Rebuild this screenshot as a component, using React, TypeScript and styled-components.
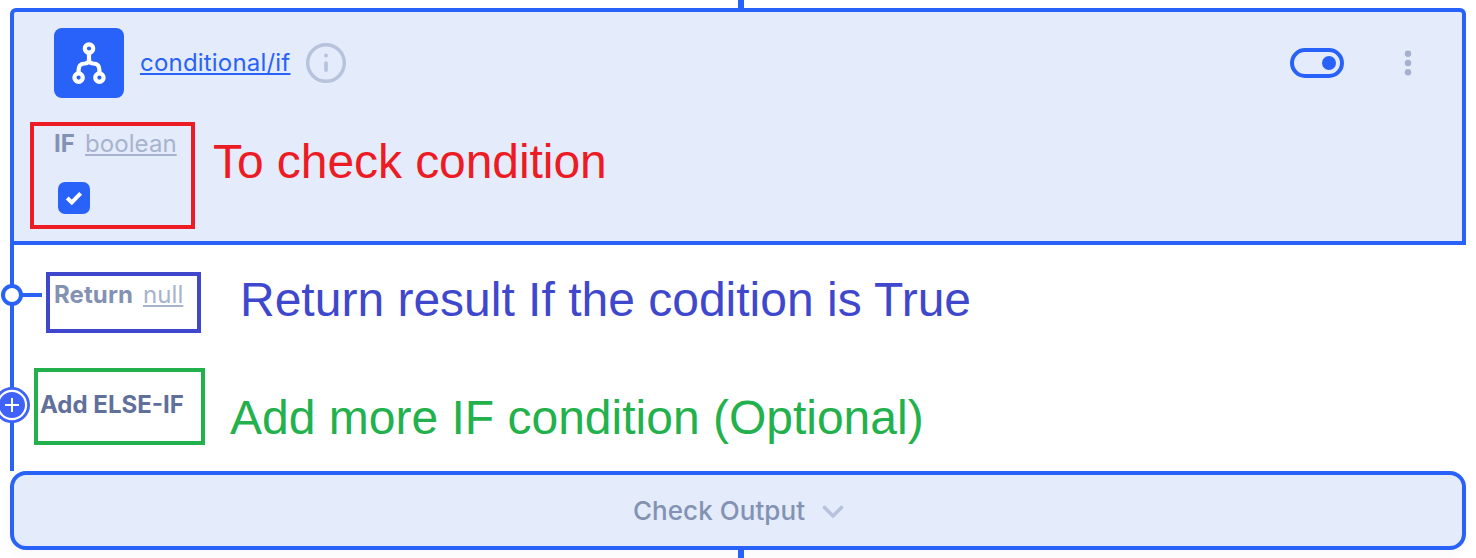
import React from 'react';
import styled, { createGlobalStyle } from 'styled-components';

const blue = '#2962f9';
const panel = '#e4ebfa';

const GlobalStyle = createGlobalStyle`
  *, *::before, *::after { box-sizing: border-box; }
  body { margin: 0; background: #fff; font-family: Inter, "Liberation Sans", sans-serif; }
`;

const Canvas = styled.main`
  position: relative;
  display: flex;
  flex-direction: column;
  width: 1476px;
  height: 558px;
  padding: 0 10px;
  overflow: hidden;
  background: #fff;
`;

const Connector = styled.div`
  flex: 0 0 8px;
  width: 6px;
  margin-left: 728px;
  background: ${blue};
`;

const StepCard = styled.section`
  flex: 0 0 237px;
  padding: 16px 48px 0 40px;
  border: 4px solid ${blue};
  border-radius: 6px 6px 0 0;
  background: ${panel};
`;

const Header = styled.header`
  display: flex;
  align-items: center;
  height: 70px;
`;

const StepIcon = styled.div`
  display: grid;
  place-items: center;
  width: 70px;
  height: 70px;
  margin-right: 16px;
  border-radius: 8px;
  background: ${blue};
`;

const StepLink = styled.a`
  width: 150px;
  margin-right: 16px;
  color: ${blue};
  font-size: 24px;
  line-height: 30px;
  letter-spacing: 0.2px;
  white-space: nowrap;
  text-decoration: underline;
  text-decoration-thickness: 2px;
  text-underline-offset: 2px;
`;

const Actions = styled.div`
  display: flex;
  align-items: center;
  gap: 58px;
  margin-left: auto;
`;

const Toggle = styled.button`
  display: flex;
  align-items: center;
  justify-content: flex-end;
  width: 54px;
  height: 30px;
  padding: 0 4px;
  border: 4px solid ${blue};
  border-radius: 15px;
  background: transparent;
`;

const ToggleKnob = styled.span`
  width: 14px;
  height: 14px;
  border-radius: 50%;
  background: ${blue};
`;

const Field = styled.div`
  display: flex;
  align-items: center;
  height: 30px;
  font-size: 24px;
  line-height: 30px;
  white-space: nowrap;
`;

const ConditionField = styled(Field)`
  margin-top: 31px;
`;

const FieldName = styled.span<{ $width: number }>`
  width: ${p => p.$width}px;
  margin-right: 10px;
  color: #8392b3;
  font-weight: 700;
  letter-spacing: 0.1px;
`;

const FieldType = styled.span`
  color: #a7b3ce;
  letter-spacing: 0.08px;
  text-decoration: underline;
  text-decoration-thickness: 2px;
  text-underline-offset: 2px;
`;

const Checkbox = styled.span`
  display: grid;
  place-items: center;
  width: 32px;
  height: 32px;
  margin: 23px 0 0 4px;
  border-radius: 7px;
  background: ${blue};
`;

const Branches = styled.section`
  flex: 0 0 226px;
  display: flex;
  flex-direction: column;
  border-left: 4px solid ${blue};
`;

const Branch = styled.div<{ $top: number }>`
  display: flex;
  align-items: center;
  height: 36px;
  margin-top: ${p => p.$top}px;
`;

const ReturnNode = styled.svg`
  width: 42px;
  height: 24px;
  margin-left: -14px;
  margin-right: 12px;
`;

const AddNode = styled.svg`
  width: 36px;
  height: 36px;
  margin-left: -20px;
  margin-right: 10px;
`;

const AddLabel = styled.span`
  color: #61709a;
  font-size: 24px;
  font-weight: 700;
  line-height: 30px;
`;

const OutputBar = styled.button`
  flex: 0 0 79px;
  display: flex;
  align-items: center;
  justify-content: center;
  gap: 17px;
  padding: 0 0 0 1px;
  border: 4px solid ${blue};
  border-radius: 16px;
  background: ${panel};
  box-shadow: 0 4px 12px rgba(0, 0, 0, 0.03);
  color: #8392b3;
  font: 500 26px/32px Inter, "Liberation Sans", sans-serif;
  letter-spacing: 0.06px;
`;

const Highlight = styled.div<{ $x: number; $y: number; $w: number; $h: number; $color: string }>`
  position: absolute;
  left: ${p => p.$x}px;
  top: ${p => p.$y}px;
  width: ${p => p.$w}px;
  height: ${p => p.$h}px;
  border: 4px solid ${p => p.$color};
`;

const Note = styled.div<{ $x: number; $y: number; $color: string; $tracking?: number }>`
  position: absolute;
  left: ${p => p.$x}px;
  top: ${p => p.$y}px;
  color: ${p => p.$color};
  font: 48px/56px "Liberation Sans", Arial, sans-serif;
  letter-spacing: ${p => p.$tracking ?? 0}px;
  white-space: nowrap;
`;

export default function App() {
  return (
    <>
      <GlobalStyle />
      <Canvas>
        <Connector />
        <StepCard>
          <Header>
            <StepIcon>
              <svg width="34" height="42" viewBox="0 0 34 42" fill="none" stroke="#fff" strokeWidth="4.2">
                <circle cx="17" cy="6.5" r="4.2" />
                <circle cx="6.6" cy="35.6" r="4.2" />
                <circle cx="27.4" cy="35.6" r="4.2" />
                <path d="M17 10.5V21M6.6 31.5V28Q6.6 21.5 13 21.5Q17 21 17 18Q17 21 21 21.5Q27.4 21.5 27.4 28V31.5" />
              </svg>
            </StepIcon>
            <StepLink>conditional/if</StepLink>
            <svg width="40" height="40" viewBox="0 0 40 40" fill="none" stroke="#b7c3dd" strokeLinecap="round">
              <circle cx="20" cy="20" r="18.3" strokeWidth="3.4" />
              <path d="M20 20.2V27" strokeWidth="3.8" />
              <circle cx="20" cy="12.6" r="2" fill="#b7c3dd" stroke="none" />
            </svg>
            <Actions>
              <Toggle aria-label="Enabled"><ToggleKnob /></Toggle>
              <svg width="12" height="28" viewBox="0 0 12 28" fill="#a3b1cf">
                <circle cx="6" cy="4.7" r="3.2" />
                <circle cx="6" cy="14" r="3.2" />
                <circle cx="6" cy="23.2" r="3.2" />
              </svg>
            </Actions>
          </Header>
          <ConditionField>
            <FieldName $width={21}>IF</FieldName>
            <FieldType>boolean</FieldType>
          </ConditionField>
          <Checkbox>
            <svg width="18" height="16" viewBox="0 0 18 16" fill="none" stroke="#fff" strokeWidth="4">
              <path d="M2.2 8L6.8 12.4L15.6 3.4" />
            </svg>
          </Checkbox>
        </StepCard>
        <Branches>
          <Branch $top={32}>
            <ReturnNode viewBox="0 0 42 24" fill="none" stroke={blue} strokeWidth="4">
              <path d="M21 12H42" />
              <circle cx="12" cy="12" r="9" fill="#fff" />
            </ReturnNode>
            <Field>
              <FieldName $width={79}>Return</FieldName>
              <FieldType>null</FieldType>
            </Field>
          </Branch>
          <Branch $top={74}>
            <AddNode viewBox="0 0 36 36">
              <circle cx="18" cy="18" r="16.6" fill="#fff" stroke="#3f62f8" strokeWidth="2.8" />
              <circle cx="18" cy="18" r="13" fill="#3f62f8" />
              <path d="M11 18H25M18 11V25" stroke="#fff" strokeWidth="2" />
            </AddNode>
            <AddLabel>Add ELSE-IF</AddLabel>
          </Branch>
        </Branches>
        <OutputBar>
          Check Output
          <svg width="22" height="14" viewBox="0 0 22 14" fill="none" stroke="#b7c3dd" strokeWidth="3.6" strokeLinecap="round" strokeLinejoin="round">
            <path d="M2.5 3.5L11 12L19.5 3.5" />
          </svg>
        </OutputBar>
        <Connector />
        <Highlight $x={30} $y={122} $w={165} $h={107} $color="#ed1c24" />
        <Highlight $x={46} $y={272} $w={155} $h={61} $color="#3f48cc" />
        <Highlight $x={34} $y={368} $w={171} $h={77} $color="#22b14c" />
        <Note $x={213} $y={134} $color="#ed1c24" $tracking={-0.07}>To check condition</Note>
        <Note $x={240} $y={272} $color="#3f48cc">Return result If the codition is True</Note>
        <Note $x={230} $y={390} $color="#22b14c">Add more IF condition (Optional)</Note>
      </Canvas>
    </>
  );
}
